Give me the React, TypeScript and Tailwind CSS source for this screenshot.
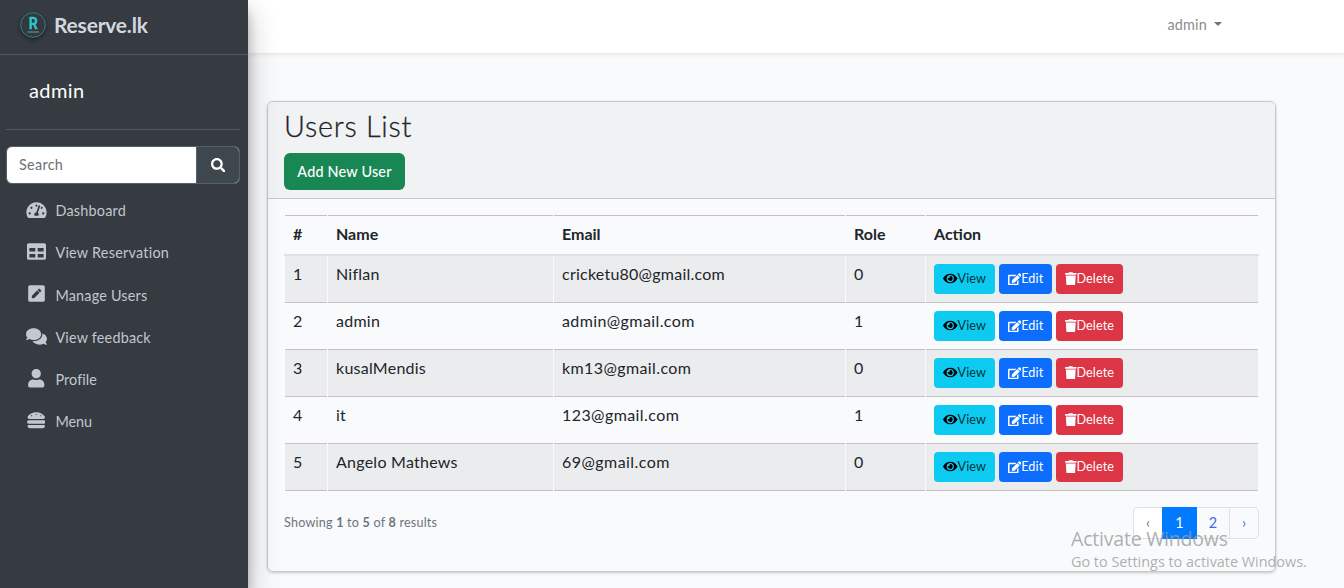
import {
  FaComments,
  FaEdit,
  FaEye,
  FaHamburger,
  FaPenSquare,
  FaSearch,
  FaTable,
  FaTachometerAlt,
  FaTrash,
  FaUser,
} from "react-icons/fa";
import type { IconType } from "react-icons";

type NavItem = { label: string; icon: IconType; iconClass: string; textClass: string };

const navItems: NavItem[] = [
  { label: "Dashboard", icon: FaTachometerAlt, iconClass: "h-[18px] w-[21px]", textClass: "tracking-[0.24px]" },
  { label: "View Reservation", icon: FaTable, iconClass: "size-[19px]", textClass: "tracking-[0.25px]" },
  { label: "Manage Users", icon: FaPenSquare, iconClass: "size-[19px]", textClass: "tracking-[0.2px]" },
  { label: "View feedback", icon: FaComments, iconClass: "h-[19px] w-[21px]", textClass: "tracking-[0.2px]" },
  { label: "Profile", icon: FaUser, iconClass: "size-[18.5px]", textClass: "tracking-[0.1px]" },
  { label: "Menu", icon: FaHamburger, iconClass: "size-[18.5px]", textClass: "tracking-[-0.05px]" },
];

const users = [
  { id: 1, name: "Niflan", email: "cricketu80@gmail.com", role: 0, emailClass: "tracking-[0.24px]" },
  { id: 2, name: "admin", email: "admin@gmail.com", role: 1, emailClass: "tracking-[0.4px]" },
  { id: 3, name: "kusalMendis", email: "km13@gmail.com", role: 0, emailClass: "tracking-[0.4px]" },
  { id: 4, name: "it", email: "123@gmail.com", role: 1, emailClass: "tracking-[0.42px]" },
  { id: 5, name: "Angelo Mathews", email: "69@gmail.com", role: 0, emailClass: "tracking-[0.45px]" },
];

function Logo() {
  return (
    <svg viewBox="0 0 32 32" className="size-8 shrink-0 drop-shadow-[0_2px_2px_rgba(0,0,0,0.4)]">
      <circle cx="16" cy="16" r="12.3" fill="#33383e" stroke="#2f8187" strokeWidth="1" />
      <text x="16.2" y="19.5" textAnchor="middle" fontSize="16" fontWeight="700" fill="#2cc4c9" stroke="#2cc4c9" strokeWidth="0.4" textLength="9" lengthAdjust="spacingAndGlyphs" fontFamily="Roboto, sans-serif">
        R
      </text>
      <rect x="10.5" y="22" width="11.5" height="2" fill="#66777c" opacity="0.75" />
    </svg>
  );
}

function Sidebar() {
  return (
    <aside className="relative z-10 flex w-[248px] shrink-0 flex-col bg-[#363a41] shadow-[0_14px_28px_rgba(0,0,0,0.25),0_10px_10px_rgba(0,0,0,0.22)]">
      <div className="flex h-[55px] items-center border-b border-[#4f5962] pb-1 pl-[17px]">
        <Logo />
        <span className="mb-px ml-[5px] text-[21px] font-bold tracking-[-0.2px] text-[#d3d7df]">Reserve.lk</span>
      </div>
      <div className="flex flex-col pr-2 pl-1.5">
        <div className="flex h-[75px] items-center border-b border-[#4f5962] pb-[5px] pl-[23px] text-[20px] tracking-[0.4px] text-white">
          admin
        </div>
        <div className="mt-4 flex h-[38px] w-[234px] overflow-hidden rounded-[6px] border border-[#56606a] bg-white">
          <div className="flex flex-1 items-center pl-3 text-[14.4px] tracking-[0.3px] text-[#6b7177]">Search</div>
          <button className="flex w-[43px] items-center justify-center border-l border-[#56606a] bg-[#3f474e] text-white">
            <FaSearch className="size-[14.5px]" />
          </button>
        </div>
        <nav className="mt-[6px] flex flex-col">
          {navItems.map(({ label, icon: Icon, iconClass, textClass }) => (
            <a key={label} className="flex h-[42.2px] items-center pl-[18px] text-[#c2c7d0]">
              <span className="mb-[3px] flex w-6 justify-center">
                <Icon className={iconClass} />
              </span>
              <span className={"ml-[7.4px] text-[14.4px] " + textClass}>{label}</span>
            </a>
          ))}
        </nav>
      </div>
    </aside>
  );
}

function ActionButtons() {
  return (
    <div className="flex gap-1 text-[12.6px] leading-none">
      <button className="flex h-[30px] w-[61px] items-center justify-center rounded-[4px] bg-[#0dcaf0] text-black">
        <FaEye className="mb-px h-[13px] w-[14.5px]" />
        <span className="tracking-[0.1px] text-black/80">View</span>
      </button>
      <button className="flex h-[30px] w-[53px] items-center justify-center rounded-[4px] bg-[#0d6efd] text-white">
        <FaEdit className="h-[12.5px] w-[13.5px]" />
        <span className="tracking-[0.1px]">Edit</span>
      </button>
      <button className="flex h-[30px] w-[67px] items-center justify-center rounded-[4px] bg-[#dc3545] text-white">
        <FaTrash className="mb-px h-[13.5px] w-[11.5px]" />
        <span className="tracking-[0.1px]">Delete</span>
      </button>
    </div>
  );
}

function UsersTable() {
  const head = "h-[39px] border-t border-[#c9bfc2] px-2 pb-0.5 text-left align-middle font-bold";
  const cell = "h-[47px] border-b border-[#c9bfc2] px-2 pt-1.5 text-left align-top tracking-[0.25px]";
  return (
    <table className="w-[975px] table-fixed border-separate border-spacing-x-px border-spacing-y-0 text-[16px] leading-[24px] text-[#212529]">
      <colgroup>
        <col className="w-[42px]" />
        <col className="w-[225px]" />
        <col className="w-[291px]" />
        <col className="w-[79px]" />
        <col className="w-[332px]" />
      </colgroup>
      <thead>
        <tr>
          <th className={head}>#</th>
          <th className={head}>Name</th>
          <th className={head}>Email</th>
          <th className={head}>Role</th>
          <th className={head}>Action</th>
        </tr>
        <tr>
          <td colSpan={5} className="h-0.5 bg-[#dee2e6] p-0 shadow-[-1px_0_0_#dee2e6,1px_0_0_#dee2e6]" />
        </tr>
      </thead>
      <tbody>
        {users.map((u) => (
          <tr key={u.id} className="odd:bg-[#ebecee]">
            <td className={cell}>{u.id}</td>
            <td className={cell}>{u.name}</td>
            <td className={cell}>
              <span className={u.emailClass}>{u.email}</span>
            </td>
            <td className={cell}>{u.role}</td>
            <td className="h-[47px] border-b border-[#c9bfc2] px-2 pt-2 align-top">
              <ActionButtons />
            </td>
          </tr>
        ))}
      </tbody>
    </table>
  );
}

function Pagination() {
  return (
    <div className="flex h-8 w-[126px] items-stretch text-[14.4px]">
      <span className="flex w-[29px] items-center justify-center rounded-l-[5px] border border-r-0 border-[#dee2e6] bg-white text-[#6c757d]">‹</span>
      <span className="flex w-[35px] items-center justify-center bg-[#007bff] text-white">1</span>
      <span className="flex w-8 items-center justify-center border-y border-[#dee2e6] text-[#3c6cf0]">2</span>
      <span className="flex flex-1 items-center justify-center rounded-r-[5px] border border-[#dee2e6] text-[#3c6cf0]">›</span>
    </div>
  );
}

export default function App() {
  return (
    <div className="relative flex h-[588px] w-[1344px] overflow-hidden bg-[#f8fafc] font-[Lato,sans-serif]">
      <Sidebar />
      <div className="flex flex-1 flex-col">
        <header className="flex h-[53px] shrink-0 items-center justify-end bg-white pr-[122px] pb-[3px] shadow-[0_2px_4px_rgba(0,0,0,0.075)]">
          <span className="text-[14.4px] tracking-[0.2px] text-[#8c8c8c]">admin</span>
          <span className="mb-[2px] ml-[7px] border-x-[4px] border-t-[4px] border-x-transparent border-t-[#737373]" />
        </header>
        <main className="pt-12 pl-[19px]">
          <section className="h-[471px] w-[1009px] overflow-hidden rounded-[6px] border border-[#c6c8ca] shadow-[0_1px_3px_rgba(0,0,0,0.2)]">
            <div className="flex h-[97px] flex-col items-start border-b border-[#c6c8ca] bg-[#f1f2f4] pt-[7px] pl-4">
              <h1 className="h-9 text-[28.8px] leading-[35px] font-light tracking-[0.75px] text-[#212529] [-webkit-text-stroke:0.3px_#212529]">
                Users List
              </h1>
              <button className="mt-2 h-[37px] w-[121px] rounded-[6px] bg-[#198754] text-[14.4px] font-medium tracking-[0.2px] text-white">
                Add New User
              </button>
            </div>
            <div className="pt-4 pl-4">
              <UsersTable />
              <div className="mt-4 flex w-[975px] items-center justify-between">
                <p className="text-[12.6px] tracking-[0.2px] text-[#6c757d]">
                  Showing <b>1</b> to <b>5</b> of <b>8</b> results
                </p>
                <Pagination />
              </div>
            </div>
          </section>
        </main>
      </div>
      <div className="pointer-events-none absolute top-[526px] left-[1071px] z-20 font-['Open_Sans',sans-serif] whitespace-nowrap text-[#9a9a9a]/80">
        <div className="text-[19.5px] leading-[26px] tracking-[-0.2px]">Activate Windows</div>
        <div className="text-[14.4px] leading-5">Go to Settings to activate Windows.</div>
      </div>
    </div>
  );
}
